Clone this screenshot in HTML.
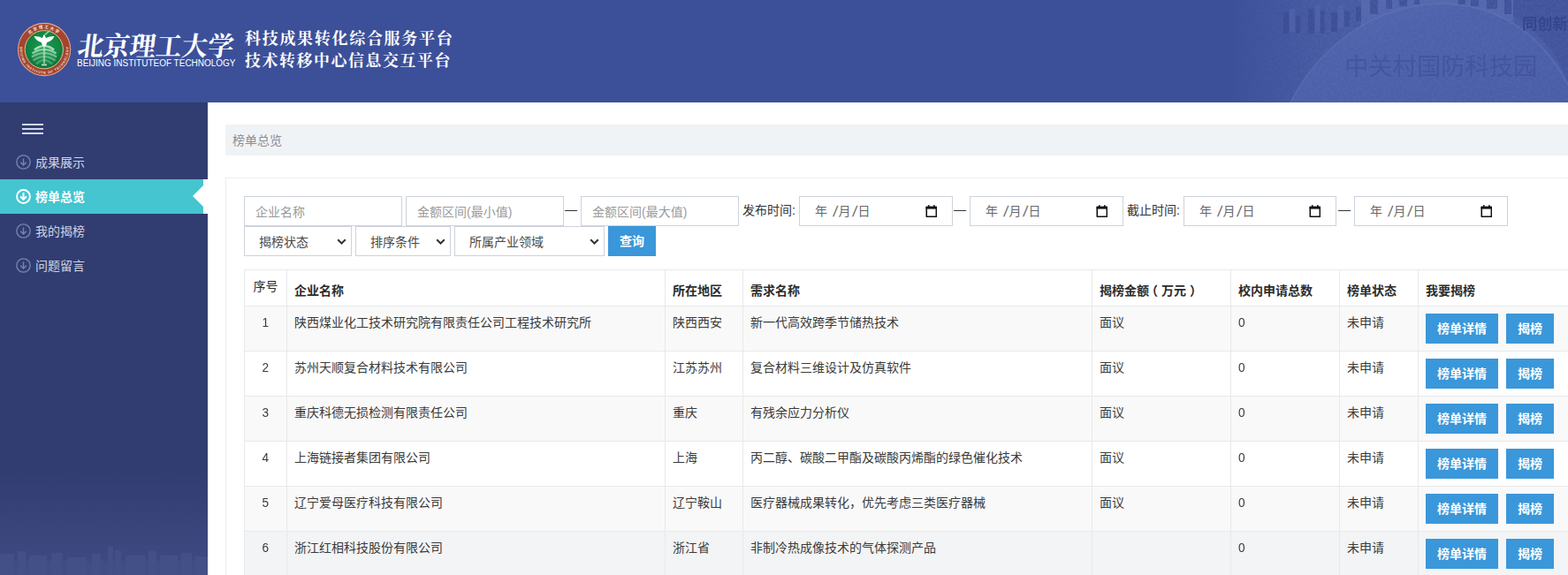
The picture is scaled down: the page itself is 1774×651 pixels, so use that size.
<!DOCTYPE html>
<html lang="zh-CN">
<head>
<meta charset="utf-8">
<title>榜单总览</title>
<style>
*{box-sizing:border-box;}
html,body{margin:0;padding:0;}
body{width:1774px;height:651px;overflow:hidden;background:#fff;font-family:"Liberation Sans","Noto Sans CJK SC",sans-serif;font-size:14px;color:#333;position:relative;}
#hdr{position:absolute;left:0;top:0;width:1774px;height:116px;background:#3c5099;overflow:hidden;}
#hdr svg.bg{position:absolute;left:0;top:0;}
#logo{position:absolute;left:19px;top:25px;width:62px;height:62px;}
#calli{position:absolute;left:86.5px;top:34.5px;}
#eng{position:absolute;left:87px;top:65.5px;color:#fff;font-size:10px;line-height:12px;white-space:nowrap;letter-spacing:-.01px;}
.ttl{position:absolute;}
#side{position:absolute;left:0;top:116px;width:235px;height:535px;background:#313d71;overflow:hidden;}
#burger{position:absolute;left:25px;top:24px;width:24px;height:12px;}
#burger i{position:absolute;left:0;width:24px;height:2px;background:#d3d8f0;}
.mi{position:absolute;left:0;width:235px;height:39px;color:#cfd3e3;font-size:14px;line-height:40px;}
.mi span{position:absolute;left:40px;top:0;}
.mi svg{position:absolute;left:18px;top:10.5px;}
.mi.on{background:#44c5d0;color:#fff;width:230px;}
.mi.on b{position:absolute;left:218px;top:7px;width:0;height:0;border-right:12px solid #fff;border-top:12.5px solid transparent;border-bottom:12.5px solid transparent;}
#onw{position:absolute;left:230px;top:87px;width:5px;height:39px;background:#fff;}
#crumb{position:absolute;left:255px;top:141px;width:1530px;height:35px;background:#f0f3f6;color:#8a8d92;font-size:14px;line-height:37px;padding-left:8px;}
#panel{position:absolute;left:255px;top:201px;width:1540px;height:480px;border:1px solid #eceeef;background:#fff;}
.inp{position:absolute;height:34px;border:1px solid #cdd2dc;background:#fff;color:#9a9a9a;font-size:14px;line-height:35px;padding-left:12px;white-space:nowrap;}
.sel{position:absolute;height:34px;border:1px solid #cdd2dc;background:#fff;color:#484848;font-size:14px;line-height:34px;padding-left:16px;white-space:nowrap;}
.sel svg{position:absolute;right:5.5px;top:13px;}
.lbl{position:absolute;font-size:14px;line-height:20px;color:#333;white-space:nowrap;}
.dt{position:absolute;height:34px;border:1px solid #cdd2dc;background:#fff;color:#686868;font-size:14px;line-height:32px;padding-left:17px;white-space:nowrap;width:174px;top:222px;line-height:33.5px;}
.dt svg{position:absolute;right:16.6px;top:9px;}
.dt span{display:inline-block;text-align:center;width:14px;}
.dt span.s{width:8px;font-size:17px;line-height:30px;vertical-align:top;margin-top:2px;transform:skewX(-8deg);}
#qry{position:absolute;left:688px;top:256px;width:54px;height:34px;background:#3a97da;color:#fff;font-weight:bold;font-size:14px;line-height:34px;text-align:center;}
table{position:absolute;left:276px;top:305px;border-collapse:collapse;table-layout:fixed;width:1520px;font-size:14px;color:#3a3a3a;}
th,td{border:1px solid #e8e9ea;padding:8px;line-height:20px;text-align:left;vertical-align:top;white-space:nowrap;overflow:visible;}
th{height:41px;padding:11px 8px 5px 8px;line-height:24px;font-weight:bold;color:#2b2b2b;vertical-align:bottom;}
th.n{font-weight:normal;vertical-align:top;padding:7px 0 0 0;text-align:center;line-height:22px;}
td.n{text-align:center;padding-left:0;padding-right:0;font-size:15.5px;}
td.z{font-size:15.5px;}
th i{font-style:normal;position:relative;}
.d{display:inline-block;transform:scaleX(.88);transform-origin:50% 50%;}
td.z .d{transform-origin:0 50%;}
tr{height:51px;}
tr.o td{background:#f9f9f9;}
tr.h td{background:#f2f4f5;}
.btn{display:inline-block;height:34px;line-height:34px;padding:0 13px;background:#3a97da;color:#fff;font-weight:bold;font-size:14px;vertical-align:top;}
.btn+.btn{margin-left:9px;}
</style>
</head>
<body>
<div id="hdr">
<svg class="bg" width="1774" height="116" viewBox="0 0 1774 116">
<defs>
<linearGradient id="g1" x1="0" x2="1" y1="0" y2="0"><stop offset="0" stop-color="#465aa3" stop-opacity="0"/><stop offset=".16" stop-color="#465aa3" stop-opacity=".55"/><stop offset=".3" stop-color="#465aa3" stop-opacity="1"/><stop offset="1" stop-color="#485ca6" stop-opacity="1"/></linearGradient>
<linearGradient id="g3" x1="0" x2="1" y1="0" y2="1"><stop offset="0" stop-color="#566ab2"/><stop offset=".35" stop-color="#4d61ab"/><stop offset="1" stop-color="#495da7"/></linearGradient>
<linearGradient id="g4" x1="0" x2="1" y1="0" y2="0"><stop offset="0" stop-color="#000"/><stop offset=".3" stop-color="#fff"/><stop offset="1" stop-color="#fff"/></linearGradient><mask id="mk" maskUnits="userSpaceOnUse" x="1385" y="0" width="389" height="116"><rect x="1385" y="0" width="389" height="116" fill="url(#g4)"/></mask><filter id="nz" x="0" y="0" width="100%" height="100%"><feTurbulence type="fractalNoise" baseFrequency=".35" numOctaves="2" seed="3" result="n"/><feColorMatrix in="n" type="matrix" values="0 0 0 0 .16  0 0 0 0 .22  0 0 0 0 .5  0 0 0 .9 -.28"/><feComposite in2="SourceGraphic" operator="in"/></filter>
</defs>
<rect x="1385" y="0" width="389" height="116" fill="url(#g1)"/>
<path d="M1540 0H1712V24H1600L1540 34Z" fill="#5d71b7" opacity=".55"/>
<g fill="#394a91" opacity=".7">
<rect x="1452" y="14" width="6" height="24"/><rect x="1466" y="18" width="5" height="20"/><rect x="1480" y="10" width="7" height="28"/><rect x="1494" y="12" width="5" height="26"/><rect x="1506" y="14" width="7" height="22"/><rect x="1521" y="12" width="6" height="18"/><rect x="1534" y="8" width="6" height="16"/>
<rect x="1550" y="0" width="9" height="16"/><rect x="1568" y="0" width="7" height="10"/><rect x="1583" y="0" width="9" height="7"/><rect x="1600" y="0" width="6" height="5"/><rect x="1650" y="0" width="8" height="5"/><rect x="1664" y="0" width="9" height="7"/><rect x="1682" y="0" width="12" height="10"/><rect x="1702" y="0" width="8" height="16"/>
</g>
<g fill="#5468b0" opacity=".5"><rect x="1459" y="10" width="6" height="26"/><rect x="1488" y="6" width="5" height="30"/><rect x="1514" y="6" width="6" height="26"/><rect x="1541" y="0" width="8" height="20"/><rect x="1560" y="0" width="7" height="12"/></g>
<path d="M1460 116 C1482 72 1535 8 1628 4 C1690 4 1742 34 1774 96 L1774 116 Z" fill="url(#g3)"/>
<path d="M1460 116 C1482 72 1535 8 1628 4 C1690 4 1742 34 1774 96" fill="none" stroke="#6276ba" stroke-width="1.5" opacity=".55"/>
<path d="M1712 0 L1774 0 L1774 92 C1762 62 1740 34 1712 18 Z" fill="#3f5199" opacity=".75"/>
<g mask="url(#mk)"><rect x="1385" y="0" width="389" height="116" filter="url(#nz)" opacity=".45"/></g>
<text x="1521" y="84.5" font-size="27.3" fill="#3c4e96" opacity=".62" font-family="'Liberation Sans','Noto Sans CJK SC',sans-serif">中关村国防科技园</text>
<text x="1722" y="32.6" font-size="17.2" fill="#33458c" opacity=".9" font-weight="bold" font-family="'Liberation Sans','Noto Sans CJK SC',sans-serif">同创新</text>
</svg>
<svg id="logo" viewBox="0 0 62 62">
<defs><radialGradient id="gg" cx=".5" cy=".45" r=".55"><stop offset="0" stop-color="#1a9a4e"/><stop offset=".7" stop-color="#128743"/><stop offset="1" stop-color="#0c7338"/></radialGradient></defs>
<circle cx="31.1" cy="31" r="29.6" fill="#a3452f" stroke="#e2a48f" stroke-width="1.1"/>
<circle cx="30.8" cy="31.2" r="21.6" fill="url(#gg)" stroke="#e6bd98" stroke-width="1"/>
<path d="M31 22v25" stroke="#bfe8cc" stroke-width="2.2" opacity=".6"/>
<path d="M31 27 Q24.95 27.3 20 31.5 M31 27 Q37.05 27.3 42 31.5" stroke="#bfe8cc" stroke-width="2.6" fill="none" opacity="0.85"/><path d="M31 31 Q23.575 31.3 17.5 35.5 M31 31 Q38.425 31.3 44.5 35.5" stroke="#bfe8cc" stroke-width="2.6" fill="none" opacity="0.7"/><path d="M31 35 Q23.3 35.3 17 39.5 M31 35 Q38.7 35.3 45 39.5" stroke="#bfe8cc" stroke-width="2.6" fill="none" opacity="0.55"/><path d="M31 39 Q24.125 39.3 18.5 43.5 M31 39 Q37.875 39.3 43.5 43.5" stroke="#bfe8cc" stroke-width="2.6" fill="none" opacity="0.42"/><path d="M31 43 Q26.05 43.3 22 47.5 M31 43 Q35.95 43.3 40 47.5" stroke="#bfe8cc" stroke-width="2.6" fill="none" opacity="0.3"/>
<path d="M31 13.5 C31.8 15 32.3 16.5 33 18 C36 16.5 39.5 15.8 42.5 16 C41 19.5 38 22 34.2 23 C33.8 25 32.8 27 31 28 C29.2 27 28.2 25 27.8 23 C24 22 21 19.5 19.5 16 C22.5 15.8 26 16.5 29 18 C29.7 16.5 30.2 15 31 13.5Z" fill="#fbfffc"/>
<path d="M32 14 Q35 12 37.5 9.5" stroke="#8fd6a6" stroke-width="1.6" fill="none"/>
<rect x="28" y="47.5" width="6" height="1.8" fill="#d8f0df" opacity=".85"/>
<path id="arcT" d="M7.3 31 A23.7 23.7 0 0 1 54.7 31" fill="none"/>
<path id="arcB" d="M4.4 25 A27.4 27.4 0 1 0 57.8 25" fill="none"/>
<g fill="#f7e6dc" font-family="'Liberation Sans','Noto Sans CJK SC',sans-serif" font-weight="bold">
<text font-size="4.6" letter-spacing="1.5" text-anchor="middle"><textPath href="#arcT" startOffset="50%">北京理工大学</textPath></text>
<text font-size="3.6" text-anchor="middle" textLength="92" lengthAdjust="spacing"><textPath href="#arcB" startOffset="50%" textLength="92" lengthAdjust="spacing">BEIJING INSTITUTE OF TECHNOLOGY</textPath></text>
</g>
</svg>
<svg id="calli" width="183.5" height="33.8" viewBox="-100 -60 6230 1120" preserveAspectRatio="none"><g transform="skewX(-7)"><text x="0" y="860" font-size="1000" font-weight="bold" fill="#fff" font-family="'Liberation Serif','Noto Serif CJK SC',serif">北京理工大学</text></g></svg>
<div id="eng">BEIJING INSTITUTEOF TECHNOLOGY</div>
<svg class="ttl" style="left:276.8px;top:34.4px" width="235" height="21.4" viewBox="0 0 12990 1160" preserveAspectRatio="none"><title>科技成果转化综合服务平台</title><text x="0" y="880" font-size="1000" letter-spacing="90" font-weight="bold" fill="#fff" font-family="'Liberation Serif','Noto Serif CJK SC',serif">科技成果转化综合服务平台</text></svg>
<svg class="ttl" style="left:276.8px;top:59.4px" width="232.7" height="21.4" viewBox="0 0 12990 1160" preserveAspectRatio="none"><title>技术转移中心信息交互平台</title><text x="0" y="880" font-size="1000" letter-spacing="90" font-weight="bold" fill="#fff" font-family="'Liberation Serif','Noto Serif CJK SC',serif">技术转移中心信息交互平台</text></svg>
</div>

<div id="side">
<svg style="position:absolute;left:0;top:415px" width="235" height="120" viewBox="0 0 235 120">
<defs><linearGradient id="g2" x1="0" x2="0" y1="0" y2="1"><stop offset="0" stop-color="#3c487f" stop-opacity="0"/><stop offset=".75" stop-color="#3c487f" stop-opacity=".95"/><stop offset="1" stop-color="#3d4980" stop-opacity="1"/></linearGradient></defs>
<rect x="0" y="0" width="235" height="120" fill="url(#g2)"/>
<g fill="#4a568e" opacity=".55">
<rect x="0" y="96" width="16" height="24"/><rect x="20" y="93" width="9" height="27"/><rect x="33" y="98" width="20" height="22"/><rect x="58" y="95" width="12" height="25"/><rect x="76" y="100" width="22" height="20"/><rect x="104" y="96" width="10" height="24"/><rect x="122" y="88" width="6" height="32"/><rect x="130" y="92" width="7" height="28"/><rect x="142" y="98" width="22" height="22"/><rect x="168" y="93" width="9" height="27"/><rect x="181" y="98" width="20" height="22"/><rect x="205" y="95" width="12" height="25"/><rect x="221" y="99" width="14" height="21"/>
<rect x="0" y="104" width="235" height="16" opacity=".6"/>
</g>
</svg>
<div id="burger"><i style="top:0"></i><i style="top:5px"></i><i style="top:10px"></i></div>
<div class="mi" style="top:48px"><svg width="17" height="17" viewBox="0 0 16 16"><circle cx="8" cy="8" r="7.2" fill="none" stroke="#7a83ad" stroke-width="1.3"/><path d="M8 4.2v6.6M5 8.2l3 3 3-3" fill="none" stroke="#7a83ad" stroke-width="1.3"/></svg><span>成果展示</span></div>
<div class="mi on" style="top:87px"><svg width="17" height="17" viewBox="0 0 16 16"><circle cx="8" cy="8" r="7" fill="none" stroke="#fff" stroke-width="1.8"/><path d="M8 4v7M4.8 8l3.2 3.2L11.2 8" fill="none" stroke="#fff" stroke-width="1.9"/></svg><span style="font-weight:bold">榜单总览</span><b></b></div>
<div id="onw"></div>
<div class="mi" style="top:126px"><svg width="17" height="17" viewBox="0 0 16 16"><circle cx="8" cy="8" r="7.2" fill="none" stroke="#7a83ad" stroke-width="1.3"/><path d="M8 4.2v6.6M5 8.2l3 3 3-3" fill="none" stroke="#7a83ad" stroke-width="1.3"/></svg><span>我的揭榜</span></div>
<div class="mi" style="top:165px"><svg width="17" height="17" viewBox="0 0 16 16"><circle cx="8" cy="8" r="7.2" fill="none" stroke="#7a83ad" stroke-width="1.3"/><path d="M8 4.2v6.6M5 8.2l3 3 3-3" fill="none" stroke="#7a83ad" stroke-width="1.3"/></svg><span>问题留言</span></div>
</div>

<div id="crumb">榜单总览</div>
<div id="panel"></div>

<div class="inp" style="left:276px;top:222px;width:179px">企业名称</div>
<div class="inp" style="left:459px;top:222px;width:179px">金额区间(最小值)</div>
<div class="lbl" style="left:639px;top:226.5px">—</div>
<div class="inp" style="left:657px;top:222px;width:179px">金额区间(最大值)</div>
<div class="lbl" style="left:840px;top:228px">发布时间:</div>
<div class="dt" style="left:904px"><span>年</span><span class="s" style="margin-left:4.5px">/</span><span>月</span><span class="s">/</span><span>日</span><svg width="13.6" height="14.6" viewBox="0 0 14 15"><path d="M1.3 2.6h11.4v11.1H1.3z" fill="none" stroke="#111" stroke-width="1.6" stroke-linejoin="round"/><rect x=".6" y="1.8" width="12.8" height="2.9" fill="#111"/><rect x="3" y=".2" width="1.7" height="2.4" fill="#111"/><rect x="9.3" y=".2" width="1.7" height="2.4" fill="#111"/></svg></div>
<div class="lbl" style="left:1079px;top:226.5px">—</div>
<div class="dt" style="left:1097px"><span>年</span><span class="s" style="margin-left:4.5px">/</span><span>月</span><span class="s">/</span><span>日</span><svg width="13.6" height="14.6" viewBox="0 0 14 15"><path d="M1.3 2.6h11.4v11.1H1.3z" fill="none" stroke="#111" stroke-width="1.6" stroke-linejoin="round"/><rect x=".6" y="1.8" width="12.8" height="2.9" fill="#111"/><rect x="3" y=".2" width="1.7" height="2.4" fill="#111"/><rect x="9.3" y=".2" width="1.7" height="2.4" fill="#111"/></svg></div>
<div class="lbl" style="left:1275px;top:228px">截止时间:</div>
<div class="dt" style="left:1339px;width:173px"><span>年</span><span class="s" style="margin-left:4.5px">/</span><span>月</span><span class="s">/</span><span>日</span><svg width="13.6" height="14.6" viewBox="0 0 14 15"><path d="M1.3 2.6h11.4v11.1H1.3z" fill="none" stroke="#111" stroke-width="1.6" stroke-linejoin="round"/><rect x=".6" y="1.8" width="12.8" height="2.9" fill="#111"/><rect x="3" y=".2" width="1.7" height="2.4" fill="#111"/><rect x="9.3" y=".2" width="1.7" height="2.4" fill="#111"/></svg></div>
<div class="lbl" style="left:1514px;top:226.5px">—</div>
<div class="dt" style="left:1532px"><span>年</span><span class="s" style="margin-left:4.5px">/</span><span>月</span><span class="s">/</span><span>日</span><svg width="13.6" height="14.6" viewBox="0 0 14 15"><path d="M1.3 2.6h11.4v11.1H1.3z" fill="none" stroke="#111" stroke-width="1.6" stroke-linejoin="round"/><rect x=".6" y="1.8" width="12.8" height="2.9" fill="#111"/><rect x="3" y=".2" width="1.7" height="2.4" fill="#111"/><rect x="9.3" y=".2" width="1.7" height="2.4" fill="#111"/></svg></div>

<div class="sel" style="left:276px;top:256px;width:122px">揭榜状态<svg width="11" height="8" viewBox="0 0 11 8"><path d="M1.2 1.2l4.3 4.3 4.3-4.3" fill="none" stroke="#333" stroke-width="2"/></svg></div>
<div class="sel" style="left:402px;top:256px;width:108px">排序条件<svg width="11" height="8" viewBox="0 0 11 8"><path d="M1.2 1.2l4.3 4.3 4.3-4.3" fill="none" stroke="#333" stroke-width="2"/></svg></div>
<div class="sel" style="left:514px;top:256px;width:170px">所属产业领域<svg width="11" height="8" viewBox="0 0 11 8"><path d="M1.2 1.2l4.3 4.3 4.3-4.3" fill="none" stroke="#333" stroke-width="2"/></svg></div>
<div id="qry">查询</div>

<table>
<colgroup><col style="width:48px"><col style="width:428px"><col style="width:88px"><col style="width:395px"><col style="width:157px"><col style="width:123px"><col style="width:89px"><col style="width:192px"></colgroup>
<thead><tr style="height:41px"><th class="n">序号</th><th>企业名称</th><th>所在地区</th><th>需求名称</th><th>揭榜金额<i style="left:-4px">（</i>万元<i style="left:4px">）</i></th><th>校内申请总数</th><th>榜单状态</th><th>我要揭榜</th></tr></thead>
<tbody>
<tr class="o"><td class="n"><span class="d">1</span></td><td>陕西煤业化工技术研究院有限责任公司工程技术研究所</td><td>陕西西安</td><td>新一代高效跨季节储热技术</td><td>面议</td><td class="z"><span class="d">0</span></td><td>未申请</td><td><span class="btn">榜单详情</span><span class="btn">揭榜</span></td></tr>
<tr><td class="n"><span class="d">2</span></td><td>苏州天顺复合材料技术有限公司</td><td>江苏苏州</td><td>复合材料三维设计及仿真软件</td><td>面议</td><td class="z"><span class="d">0</span></td><td>未申请</td><td><span class="btn">榜单详情</span><span class="btn">揭榜</span></td></tr>
<tr class="o"><td class="n"><span class="d">3</span></td><td>重庆科德无损检测有限责任公司</td><td>重庆</td><td>有残余应力分析仪</td><td>面议</td><td class="z"><span class="d">0</span></td><td>未申请</td><td><span class="btn">榜单详情</span><span class="btn">揭榜</span></td></tr>
<tr><td class="n"><span class="d">4</span></td><td>上海链接者集团有限公司</td><td>上海</td><td>丙二醇、碳酸二甲酯及碳酸丙烯酯的绿色催化技术</td><td>面议</td><td class="z"><span class="d">0</span></td><td>未申请</td><td><span class="btn">榜单详情</span><span class="btn">揭榜</span></td></tr>
<tr class="o"><td class="n"><span class="d">5</span></td><td>辽宁爱母医疗科技有限公司</td><td>辽宁鞍山</td><td>医疗器械成果转化，优先考虑三类医疗器械</td><td>面议</td><td class="z"><span class="d">0</span></td><td>未申请</td><td><span class="btn">榜单详情</span><span class="btn">揭榜</span></td></tr>
<tr class="h"><td class="n"><span class="d">6</span></td><td>浙江红相科技股份有限公司</td><td>浙江省</td><td>非制冷热成像技术的气体探测产品</td><td></td><td class="z"><span class="d">0</span></td><td>未申请</td><td><span class="btn">榜单详情</span><span class="btn">揭榜</span></td></tr>
</tbody>
</table>
</body>
</html>
